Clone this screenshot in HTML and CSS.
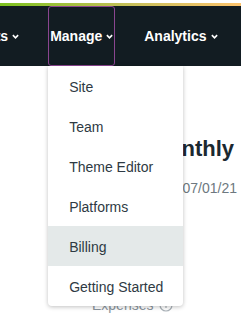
FILE: index.html
```html
<!DOCTYPE html>
<html lang="en">
<head>
    <meta charset="UTF-8">
    <meta name="viewport" content="width=device-width, initial-scale=1.0">
    <title>Manage</title>
    <link rel="stylesheet" href="styles.css">
</head>
<body>
    <div class="stripe"></div>
    <nav class="navbar">
        <div class="nav-item first">
            <span>Posts</span>
            <svg class="chevron" viewBox="0 0 8 5"><polyline points="1,1 4,4 7,1"/></svg>
        </div>
        <div class="nav-item active">
            <span>Manage</span>
            <svg class="chevron" viewBox="0 0 8 5"><polyline points="1,1 4,4 7,1"/></svg>
            <ul class="dropdown">
                <li>Site</li>
                <li>Team</li>
                <li>Theme Editor</li>
                <li>Platforms</li>
                <li class="hover">Billing</li>
                <li>Getting Started</li>
            </ul>
        </div>
        <div class="nav-item">
            <span>Analytics</span>
            <svg class="chevron" viewBox="0 0 8 5"><polyline points="1,1 4,4 7,1"/></svg>
        </div>
    </nav>

    <main class="content">
        <h1 class="title">Monthly</h1>
        <p class="date">07/01/21</p>
        <p class="expenses">
            Expenses
            <svg class="info" viewBox="0 0 14 14"><circle cx="7" cy="7" r="6"/><line x1="7" y1="6" x2="7" y2="10"/><circle class="dot" cx="7" cy="4" r="0.8"/></svg>
        </p>
    </main>
</body>
</html>
```

FILE: styles.css
```css
/* page */
body {
    margin: 0;
    background-color: #fff;
    font-family: 'Liberation Sans', Arial, sans-serif;
    overflow: hidden;
}

.stripe {
    height: 3px;
    margin-top: 3px;
    background: linear-gradient(to right, #7cc11f, #c8c05c 55%, #fdc46e);
}

/* top navigation */
.navbar {
    display: flex;
    align-items: stretch;
    gap: 27px;
    height: 60px;
    background-color: #121c22;
}

.nav-item {
    position: relative;
    display: flex;
    align-items: center;
    gap: 4px;
    padding: 0 1px;
    border: 1px solid transparent;
    border-radius: 3px;
    color: #fff;
    font-size: 14px;
    font-weight: bold;
}

.nav-item.first {
    margin-left: -32px;
}

.nav-item.active {
    border-color: #8a4590;
}

.chevron {
    width: 7px;
    height: 5px;
    fill: none;
    stroke: #fff;
    stroke-width: 1.9;
}

/* dropdown menu */
.dropdown {
    position: absolute;
    top: 100%;
    left: -1px;
    width: 135px;
    margin: 1px 0 0;
    padding: 0;
    list-style: none;
    background-color: #fff;
    border-radius: 0 0 4px 4px;
    box-shadow: 0 1px 4px rgba(0, 0, 0, 0.25);
    z-index: 2;
}

.dropdown li {
    height: 40px;
    line-height: 42px;
    padding-left: 21px;
    font-size: 14px;
    font-weight: normal;
    color: #2e3a43;
}

.dropdown li.hover {
    background-color: #e4e9e9;
}

/* page content behind the menu */
.content {
    padding-top: 70px;
}

.title {
    margin: 0;
    padding-right: 7px;
    text-align: right;
    font-size: 22px;
    font-weight: bold;
    color: #1b2830;
}

.date {
    margin: 18px 0 0;
    padding-right: 4px;
    text-align: right;
    font-size: 14px;
    line-height: 16px;
    color: #6d7880;
}

.expenses {
    display: flex;
    align-items: center;
    gap: 6px;
    margin: 101px 0 0;
    padding-left: 92px;
    font-size: 14px;
    line-height: 16px;
    color: #8a949c;
}

.info {
    width: 14px;
    height: 14px;
    fill: none;
    stroke: #aab2b8;
    stroke-width: 1.2;
}

.info .dot {
    fill: #aab2b8;
    stroke: none;
}
```
